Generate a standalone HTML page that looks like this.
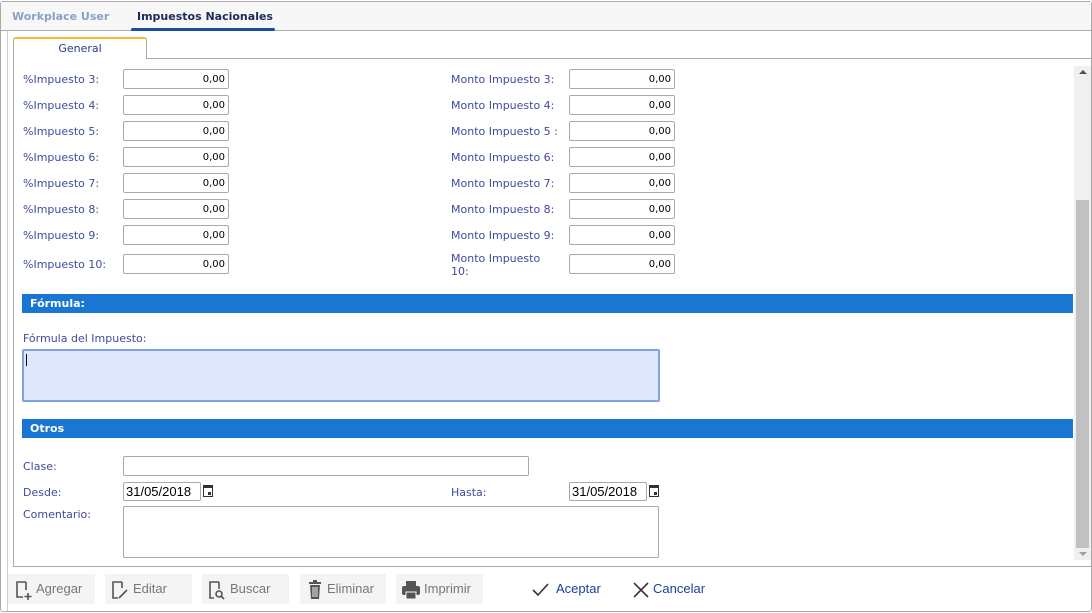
<!DOCTYPE html>
<html><head><meta charset="utf-8"><style>
*{box-sizing:border-box;margin:0;padding:0}
body{width:1092px;height:613px;background:#fff;font-family:"DejaVu Sans","Liberation Sans",sans-serif;position:relative;overflow:hidden}
.a{position:absolute}
.lbl{position:absolute;font-size:11px;color:#3f4ba0;line-height:13px}
.inp{position:absolute;height:20px;border:1px solid #a9a9a9;border-radius:2px;background:#fff;font-size:10px;text-align:right;padding-right:3px;line-height:20px;color:#000}
.bar{position:absolute;left:22px;width:1051px;height:19px;background:#1976d2;color:#fff;font-weight:bold;font-size:11px;padding-left:8px;line-height:19px}
.btn{position:absolute;top:574px;height:30px;background:#f4f4f4;font-size:13px;color:#777;line-height:30px;font-family:"Liberation Sans",sans-serif}
.btn svg{position:absolute;top:5px;left:4px}
.btn span{position:absolute;left:24px}
.date{position:absolute;height:19px;border:1px solid #a9a9a9;border-radius:2px;font-size:13px;font-family:"Liberation Sans",sans-serif;line-height:17px;padding-left:2px;width:78px}
</style></head><body>
<div class="a" style="left:0;top:1px;width:1092px;height:611px;border:1px solid #aaa;border-radius:3px"></div>
<div class="a" style="left:1px;top:2px;width:1090px;height:29px;background:#f7f7f7;border-bottom:1px solid #aaa"></div>
<div class="a" style="left:12px;top:10px;font-size:11px;font-weight:bold;color:#8aa0c8">Workplace User</div>
<div class="a" style="left:137px;top:10px;font-size:11px;font-weight:bold;color:#1a2a5a">Impuestos Nacionales</div>
<div class="a" style="left:131px;top:28px;width:144px;height:3px;background:#1a4fa0;border-radius:2px"></div>
<div class="a" style="left:7px;top:31px;width:1px;height:580px;background:#ccc"></div>
<div class="a" style="left:13px;top:58px;width:1078px;height:509px;border:1px solid #aaa;border-right:none"></div>
<div class="a" style="left:13px;top:37px;width:134px;height:22px;background:#fff;border:1px solid #aaa;border-bottom:none;border-top:2px solid #f5b731;border-radius:3px 3px 0 0;font-size:11px;color:#2a3a8a;text-align:center;line-height:19px">General</div>
<div class="a" style="left:1074px;top:66px;width:17px;height:494px;background:#f0f0f0"></div>
<div class="a" style="left:1076px;top:200px;width:13px;height:348px;background:#c1c1c1"></div>
<div class="a" style="left:1079px;top:70px;width:0;height:0;border-left:4px solid transparent;border-right:4px solid transparent;border-bottom:4px solid #505050"></div>
<div class="a" style="left:1079px;top:552px;width:0;height:0;border-left:4px solid transparent;border-right:4px solid transparent;border-top:4px solid #a0a0a0"></div>

<div class="lbl" style="left:23px;top:73px">%Impuesto 3:</div><div class="inp" style="left:123px;top:69px;width:106px">0,00</div>
<div class="lbl" style="left:451px;top:73px">Monto Impuesto 3:</div><div class="inp" style="left:569px;top:69px;width:106px">0,00</div>
<div class="lbl" style="left:23px;top:99px">%Impuesto 4:</div><div class="inp" style="left:123px;top:95px;width:106px">0,00</div>
<div class="lbl" style="left:451px;top:99px">Monto Impuesto 4:</div><div class="inp" style="left:569px;top:95px;width:106px">0,00</div>
<div class="lbl" style="left:23px;top:125px">%Impuesto 5:</div><div class="inp" style="left:123px;top:121px;width:106px">0,00</div>
<div class="lbl" style="left:451px;top:125px">Monto Impuesto 5 :</div><div class="inp" style="left:569px;top:121px;width:106px">0,00</div>
<div class="lbl" style="left:23px;top:151px">%Impuesto 6:</div><div class="inp" style="left:123px;top:147px;width:106px">0,00</div>
<div class="lbl" style="left:451px;top:151px">Monto Impuesto 6:</div><div class="inp" style="left:569px;top:147px;width:106px">0,00</div>
<div class="lbl" style="left:23px;top:177px">%Impuesto 7:</div><div class="inp" style="left:123px;top:173px;width:106px">0,00</div>
<div class="lbl" style="left:451px;top:177px">Monto Impuesto 7:</div><div class="inp" style="left:569px;top:173px;width:106px">0,00</div>
<div class="lbl" style="left:23px;top:203px">%Impuesto 8:</div><div class="inp" style="left:123px;top:199px;width:106px">0,00</div>
<div class="lbl" style="left:451px;top:203px">Monto Impuesto 8:</div><div class="inp" style="left:569px;top:199px;width:106px">0,00</div>
<div class="lbl" style="left:23px;top:229px">%Impuesto 9:</div><div class="inp" style="left:123px;top:225px;width:106px">0,00</div>
<div class="lbl" style="left:451px;top:229px">Monto Impuesto 9:</div><div class="inp" style="left:569px;top:225px;width:106px">0,00</div>
<div class="lbl" style="left:23px;top:258px">%Impuesto 10:</div><div class="inp" style="left:123px;top:254px;width:106px">0,00</div>
<div class="lbl" style="left:451px;top:252px">Monto Impuesto<br>10:</div><div class="inp" style="left:569px;top:254px;width:106px">0,00</div>

<div class="bar" style="top:294px">Fórmula:</div>
<div class="lbl" style="left:23px;top:332px">Fórmula del Impuesto:</div>
<div class="a" style="left:22px;top:349px;width:638px;height:53px;background:#e0e6fc;border:2px solid #7fa4e0;border-radius:2px"></div>
<div class="a" style="left:26px;top:354px;width:1px;height:12px;background:#000"></div>
<div class="bar" style="top:419px">Otros</div>
<div class="lbl" style="left:23px;top:460px">Clase:</div>
<div class="inp" style="left:123px;top:456px;width:406px"></div>
<div class="lbl" style="left:23px;top:486px">Desde:</div>
<div class="date" style="left:123px;top:482px">31/05/2018</div>
<svg class="a" style="left:202px;top:484px" width="12" height="14" viewBox="0 0 12 14"><rect x="1" y="1" width="10" height="12" fill="#333"/><rect x="2" y="4" width="8" height="8" fill="#fff"/><rect x="6" y="8" width="3" height="3" fill="#333"/></svg>
<div class="lbl" style="left:451px;top:486px">Hasta:</div>
<div class="date" style="left:569px;top:482px">31/05/2018</div>
<svg class="a" style="left:648px;top:484px" width="12" height="14" viewBox="0 0 12 14"><rect x="1" y="1" width="10" height="12" fill="#333"/><rect x="2" y="4" width="8" height="8" fill="#fff"/><rect x="6" y="8" width="3" height="3" fill="#333"/></svg>
<div class="lbl" style="left:23px;top:508px">Comentario:</div>
<div class="inp" style="left:123px;top:506px;width:536px;height:52px"></div>

<div class="btn" style="left:8px;width:87px"><svg width="22" height="22" viewBox="0 0 22 22" fill="none" stroke="#555" stroke-width="1.6"><path d="M14 3H5v15h6"/><path d="M14 3v8"/><path d="M16 14v7M12.5 17.5h7"/></svg><span style="left:28px">Agregar</span></div>
<div class="btn" style="left:105px;width:87px"><svg width="22" height="22" viewBox="0 0 22 22" fill="none" stroke="#555" stroke-width="1.6"><path d="M13 3H4v16h5M13 3v6"/><path d="M10 19l8-8"/></svg><span style="left:28px">Editar</span></div>
<div class="btn" style="left:202px;width:87px"><svg width="22" height="22" viewBox="0 0 22 22" fill="none" stroke="#555" stroke-width="1.6"><path d="M13 3H4v16h4M13 3v7"/><circle cx="13" cy="15" r="3"/><path d="M15 17l3 3"/></svg><span style="left:28px">Buscar</span></div>
<div class="btn" style="left:300px;width:86px"><svg width="22" height="22" viewBox="0 0 22 22"><rect x="5" y="3" width="12" height="2" fill="#555"/><rect x="9" y="1" width="4" height="2" fill="#555"/><path d="M6 6h10l-1 14H7z" fill="#555"/><path d="M9 8v10M11 8v10M13 8v10" stroke="#f4f4f4"/></svg><span style="left:27px">Eliminar</span></div>
<div class="btn" style="left:396px;width:87px"><svg width="22" height="22" viewBox="0 0 22 22"><rect x="6" y="2" width="10" height="5" fill="#555"/><rect x="2" y="7" width="18" height="9" rx="2" fill="#555"/><rect x="6" y="13" width="10" height="7" fill="#555" stroke="#f4f4f4"/></svg><span style="left:28px">Imprimir</span></div>
<div class="btn" style="left:527px;width:80px;background:none;color:#1a3f9a"><svg width="22" height="22" viewBox="0 0 22 22" fill="none" stroke="#333" stroke-width="1.6"><path d="M2 11l5 5L17 5"/></svg><span style="left:29px">Aceptar</span></div>
<div class="btn" style="left:626px;width:80px;background:none;color:#1a3f9a"><svg width="22" height="22" viewBox="0 0 22 22" fill="none" stroke="#333" stroke-width="1.6"><path d="M4 4l14 14M18 4L4 18"/></svg><span style="left:27px">Cancelar</span></div>
</body></html>
